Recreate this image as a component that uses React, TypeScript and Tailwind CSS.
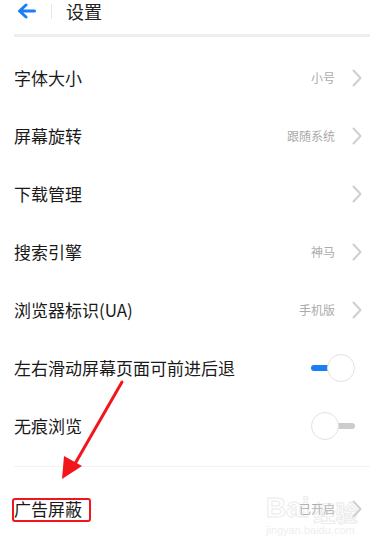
import React from "react"

type Row = {
  label: string
  value?: string
  kind: "link" | "on" | "off"
}

const ROWS: Row[] = [
  { label: "字体大小", value: "小号", kind: "link" },
  { label: "屏幕旋转", value: "跟随系统", kind: "link" },
  { label: "下载管理", kind: "link" },
  { label: "搜索引擎", value: "神马", kind: "link" },
  { label: "浏览器标识(UA)", value: "手机版", kind: "link" },
  { label: "左右滑动屏幕页面可前进后退", kind: "on" },
  { label: "无痕浏览", kind: "off" },
]

const FONT = { fontFamily: '"Noto Sans CJK SC", "Noto Sans", sans-serif' }

function Chevron() {
  return (
    <svg width="10" height="18" viewBox="0 0 10 18" className="ml-[17px] mr-[8px]">
      <path d="M1.5 1.5 L8.5 9 L1.5 16.5" fill="none" stroke="#cfcfcf" strokeWidth="2" strokeLinecap="round" strokeLinejoin="round" />
    </svg>
  )
}

function Toggle({ on }: { on: boolean }) {
  return (
    <div className="relative w-[44px] h-[28px] mr-[15px]">
      {on ? (
        <>
          <div className="absolute left-0 top-[11px] w-[20px] h-[6px] rounded-full bg-[#1a7ff5]" />
          <div className="absolute right-0 top-0 w-[28px] h-[28px] rounded-full bg-white border border-[#e2e2e2]" />
        </>
      ) : (
        <>
          <div className="absolute right-0 top-[11px] w-[20px] h-[6px] rounded-full bg-[#cccccc]" />
          <div className="absolute left-0 top-0 w-[28px] h-[28px] rounded-full bg-white border border-[#e2e2e2]" />
        </>
      )}
    </div>
  )
}

function SettingRow({ row }: { row: Row }) {
  return (
    <div className="flex items-center h-[58px]">
      <span className="flex-1 text-[17px] text-[#1a1a1a]">{row.label}</span>
      {row.kind === "link" ? (
        <div className="flex items-center">
          {row.value && <span className="text-[12px] text-[#ababab]">{row.value}</span>}
          <Chevron />
        </div>
      ) : (
        <Toggle on={row.kind === "on"} />
      )}
    </div>
  )
}

export default function App() {
  return (
    <div className="relative w-[384px] h-[549px] bg-white overflow-hidden" style={FONT}>
      {/* Header */}
      <div className="flex items-center h-[22px] pl-[17px]">
        <svg width="19" height="16" viewBox="0 0 19 16">
          <path d="M17.5 8 H3 M9 2 L2.5 8 L9 14" fill="none" stroke="#1a7ff5" strokeWidth="3" strokeLinecap="round" strokeLinejoin="round" />
        </svg>
        <div className="ml-[15px] w-px h-[15px] bg-[#e6e6e6]" />
        <span className="ml-[14px] text-[18px] leading-[22px] text-[#222]">设置</span>
      </div>

      <div className="mx-[14px] mt-[12px] h-[3px] bg-[#eeeeee]" />

      <div className="px-[14px] mt-[12px]">
        {ROWS.map((r) => (
          <SettingRow key={r.label} row={r} />
        ))}
        <div className="mt-[11px] h-px bg-[#f2f2f2]" />
        <div className="mt-[13px]">
          <SettingRow row={{ label: "广告屏蔽", value: "已开启", kind: "link" }} />
        </div>
      </div>

      {/* Annotation overlay */}
      <div className="absolute left-[12px] top-[498px] w-[79px] h-[24px] border-2 border-[#f2151b] rounded-[3px]" />
      <svg className="absolute left-0 top-0" width="384" height="549" viewBox="0 0 384 549">
        <path d="M122 382 L76 462" stroke="#f2151b" strokeWidth="3" strokeLinecap="round" />
        <polygon points="62,479 64,456 82,466" fill="#f2151b" />
      </svg>

      {/* Watermark */}
      <div className="absolute left-[266px] top-[494px] flex flex-col items-start opacity-50 pointer-events-none">
        <div className="flex items-end leading-none">
          <span className="text-[28px] font-bold text-transparent" style={{ fontFamily: '"Liberation Sans", sans-serif', WebkitTextStroke: "1px #d8d8d8" }}>Bai</span>
          <span className="text-[22px] font-bold text-transparent ml-[4px]" style={{ WebkitTextStroke: "1px #d8d8d8" }}>经验</span>
        </div>
        <span className="text-[11px] text-[#e0e0e0] leading-none mt-[3px]" style={{ fontFamily: '"Liberation Sans", sans-serif' }}>jingyan.baidu.com</span>
      </div>
    </div>
  )
}
